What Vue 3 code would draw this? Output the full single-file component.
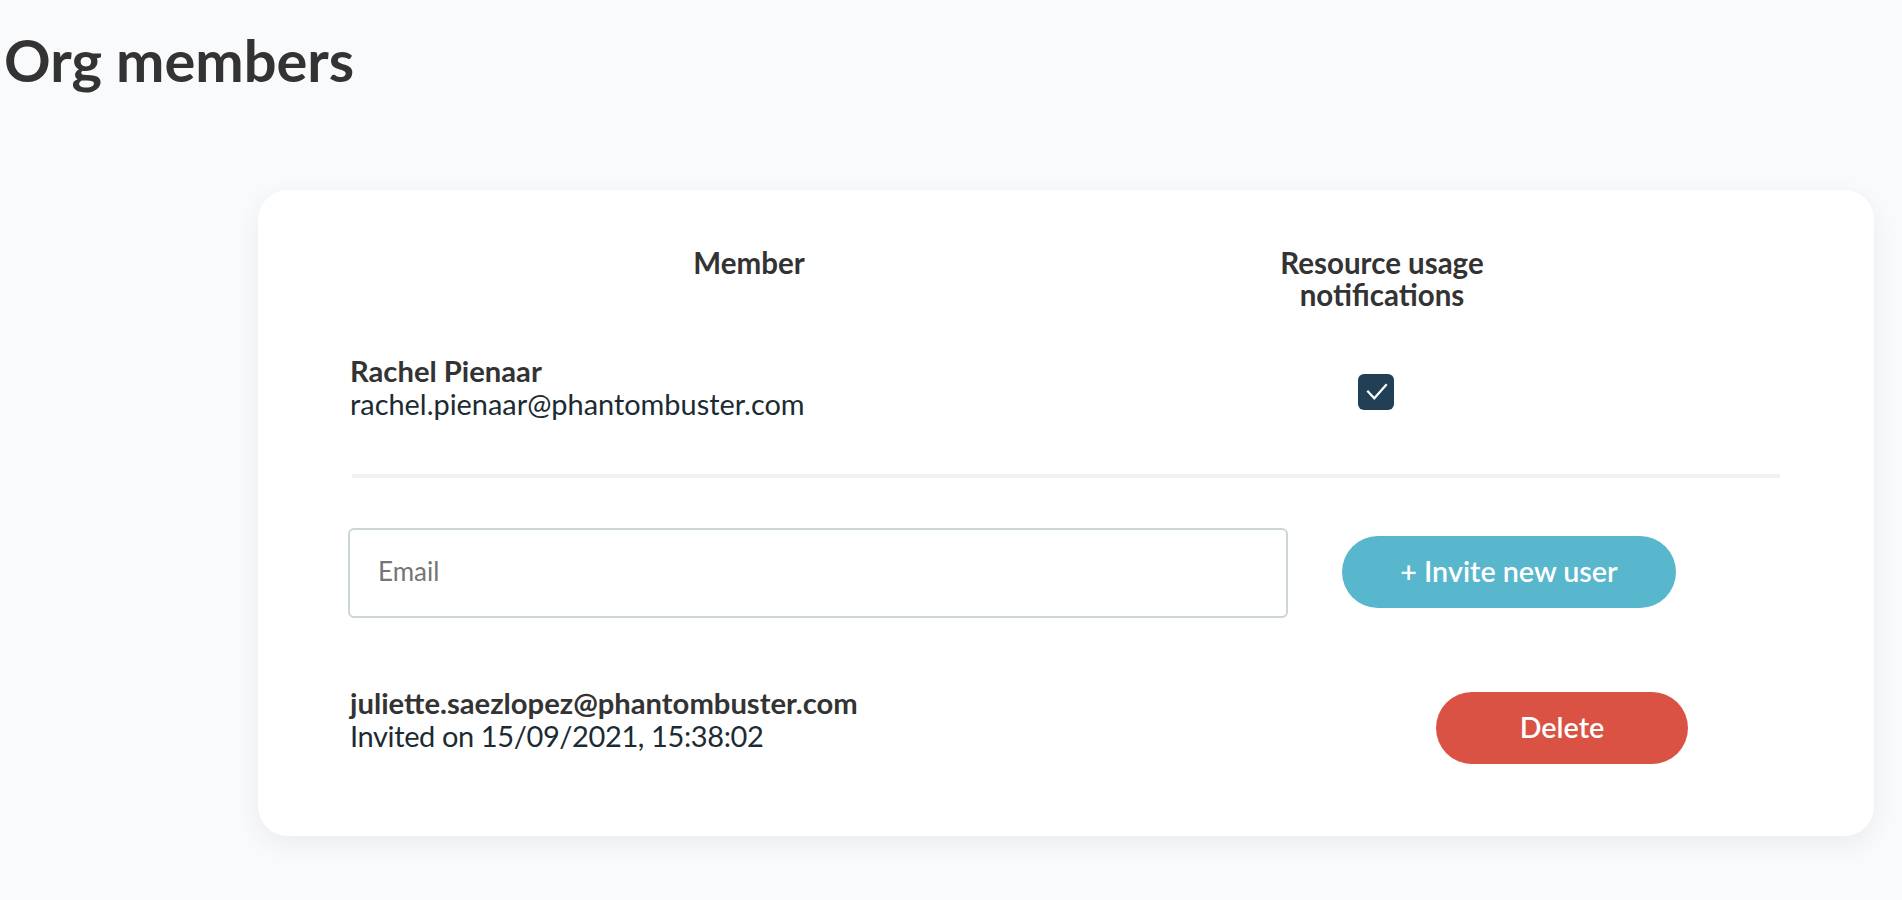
<script setup>
const headers = ['Member', 'Resource usage notifications']
const member = { name: 'Rachel Pienaar', email: 'rachel.pienaar@phantombuster.com' }
const invite = { email: 'juliette.saezlopez@phantombuster.com', date: 'Invited on 15/09/2021, 15:38:02' }
</script>

<template>
  <main class="page">
    <h1 class="title">Org members</h1>
    <section class="card">
      <div class="table-head">
        <div class="head-cell head-member">{{ headers[0] }}</div>
        <div class="head-cell head-notify">{{ headers[1] }}</div>
      </div>
      <div class="member-row">
        <div class="person">
          <div class="strong">{{ member.name }}</div>
          <div class="sub">{{ member.email }}</div>
        </div>
        <span class="checkbox" role="checkbox" aria-checked="true">
          <svg width="36" height="36" viewBox="0 0 36 36" fill="none">
            <path d="M9.3 16.7 L16.3 24.3 L28.7 10.3" stroke="#fff" stroke-width="2.2" />
          </svg>
        </span>
      </div>
      <div class="divider"></div>
      <form class="invite-form" @submit.prevent>
        <input class="email" type="text" placeholder="Email" />
        <button class="btn btn-invite" type="button">+ Invite new user</button>
      </form>
      <div class="invite-row">
        <div class="person">
          <div class="strong">{{ invite.email }}</div>
          <div class="sub date">{{ invite.date }}</div>
        </div>
        <button class="btn btn-delete" type="button">Delete</button>
      </div>
    </section>
  </main>
</template>

<style>
html, body { margin: 0; background: #f9fafc; }
</style>

<style scoped>
.page {
  height: 900px;
  box-sizing: border-box;
  overflow: hidden;
  padding: 26px 28px 0 0;
  background: #f9fafc;
  font-family: Lato, "Liberation Sans", sans-serif;
  color: #333;
}
.title {
  margin: 0 0 96px 4px;
  font-size: 57.8px;
  line-height: 68px;
  font-weight: 700;
  color: #333;
}
.card {
  box-sizing: border-box;
  width: 1616px;
  height: 646px;
  margin-left: 258px;
  padding: 57px 0 0 92px;
  background: #fff;
  border-radius: 30px;
  box-shadow: 0 8px 24px rgba(40, 60, 80, 0.07);
}
.table-head {
  display: grid;
  grid-template-columns: 798px 468px;
  font-size: 29.5px;
  line-height: 32px;
  font-weight: 700;
  text-align: center;
}
.head-notify { padding: 0 60px; }
.member-row {
  display: flex;
  align-items: flex-start;
  height: 67px;
  margin-top: 43px;
}
.person { font-size: 29px; line-height: 33px; }
.strong { font-size: 29.2px; font-weight: 700; color: #333; }
.sub { font-size: 28.9px; color: #1c2b33; }
.date { font-size: 29px; letter-spacing: -0.38px; }
.member-row .person { width: 1008px; }
.checkbox {
  display: flex;
  width: 36px;
  height: 36px;
  margin-top: 20px;
  border-radius: 6px;
  background: #213f55;
}
.divider {
  width: 1428px;
  height: 4px;
  margin: 53px 0 0 2px;
  background: #f0f1f4;
}
.invite-form {
  display: flex;
  align-items: flex-start;
  margin-top: 50px;
  margin-left: -2px;
}
.email {
  box-sizing: border-box;
  width: 940px;
  height: 90px;
  padding: 0 28px 4px;
  border: 2px solid #ccd5d8;
  border-radius: 6px;
  background: #fff;
  outline: none;
  font-family: inherit;
  font-size: 26px;
  color: #333;
}
.email::placeholder { color: #757575; opacity: 1; }
.btn {
  height: 72px;
  padding: 0 0 3px;
  border: none;
  border-radius: 36px;
  color: #fff;
  font-family: inherit;
  font-size: 28.7px;
  font-weight: 600;
}
.btn-invite { width: 334px; margin: 8px 0 0 54px; background: #58b6cd; }
.invite-row {
  display: flex;
  align-items: flex-start;
  margin-top: 74px;
}
.invite-row .person { width: 1086px; margin-top: -6px; }
.btn-delete { width: 252px; background: #da5243; }
</style>
